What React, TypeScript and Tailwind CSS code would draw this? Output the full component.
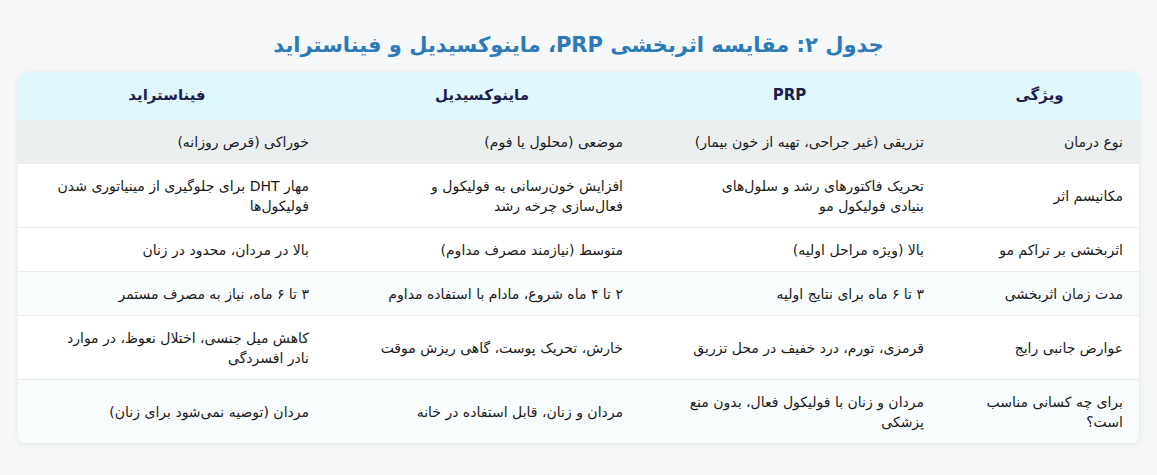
import React from "react";

const headers = ["ویژگی", "PRP", "ماینوکسیدیل", "فیناستراید"];

type Cell = string | string[];

const rows: Cell[][] = [
  ["نوع درمان", "تزریقی (غیر جراحی، تهیه از خون بیمار)", "موضعی (محلول یا فوم)", "خوراکی (قرص روزانه)"],
  [
    "مکانیسم اثر",
    ["تحریک فاکتورهای رشد و سلول‌های", "بنیادی فولیکول مو"],
    ["افزایش خون‌رسانی به فولیکول و", "فعال‌سازی چرخه رشد"],
    ["مهار DHT برای جلوگیری از مینیاتوری شدن", "فولیکول‌ها"],
  ],
  ["اثربخشی بر تراکم مو", "بالا (ویژه مراحل اولیه)", "متوسط (نیازمند مصرف مداوم)", "بالا در مردان، محدود در زنان"],
  ["مدت زمان اثربخشی", "۳ تا ۶ ماه برای نتایج اولیه", "۲ تا ۴ ماه شروع، مادام با استفاده مداوم", "۳ تا ۶ ماه، نیاز به مصرف مستمر"],
  [
    "عوارض جانبی رایج",
    "قرمزی، تورم، درد خفیف در محل تزریق",
    "خارش، تحریک پوست، گاهی ریزش موقت",
    ["کاهش میل جنسی، اختلال نعوظ، در موارد", "نادر افسردگی"],
  ],
  [
    ["برای چه کسانی مناسب", "است؟"],
    ["مردان و زنان با فولیکول فعال، بدون منع", "پزشکی"],
    "مردان و زنان، قابل استفاده در خانه",
    "مردان (توصیه نمی‌شود برای زنان)",
  ],
];

const widths = ["w-[199px]", "w-[301px]", "w-[314px]", "w-[316px]"];

const rowBg = (i: number) => {
  if (i === 0) return "bg-[#eceff0]";
  if (i === 3 || i === 5) return "bg-[#f9fcfc]";
  return "bg-white";
};

export default function App() {
  return (
    <div
      dir="rtl"
      className="min-h-[475px] bg-[#f6f7f9] px-[18px] pt-[31px] pb-8 text-[#1a1a1a]"
      style={{ fontFamily: '"DejaVu Sans", "Noto Sans", sans-serif' }}
    >
      <h2 className="mb-[13px] text-center text-[21px] font-bold leading-[28px] text-[#2c7bb8]">
        جدول ۲: مقایسه اثربخشی PRP، ماینوکسیدیل و فیناستراید
      </h2>

      <div className="overflow-hidden rounded-lg bg-white shadow-[0_1px_6px_rgba(0,0,0,0.08)]">
        <table className="w-full table-fixed border-collapse text-sm">
          <thead>
            <tr className="bg-[#dff8fb]">
              {headers.map((h, i) => (
                <th
                  key={h}
                  className={`${widths[i]} h-[48px] px-4 text-center text-[15px] font-bold text-[#1f1d4d]`}
                >
                  {h}
                </th>
              ))}
            </tr>
          </thead>
          <tbody>
            {rows.map((r, i) => (
              <tr key={i} className={`${rowBg(i)} ${i > 0 ? "border-t border-[#e8eaec]" : ""}`}>
                {r.map((c, j) => (
                  <td key={j} className="px-4 py-[11.5px] text-right align-middle leading-5">
                    {Array.isArray(c)
                      ? c.map((line, k) => (
                          <React.Fragment key={k}>
                            {k > 0 && <br />}
                            {line}
                          </React.Fragment>
                        ))
                      : c}
                  </td>
                ))}
              </tr>
            ))}
          </tbody>
        </table>
      </div>
    </div>
  );
}
